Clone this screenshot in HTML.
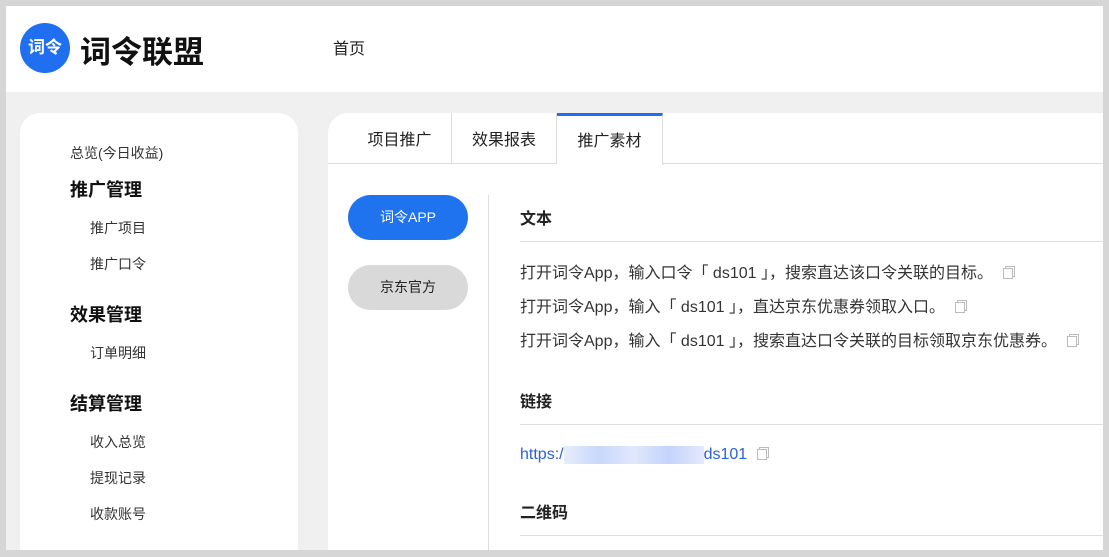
<!DOCTYPE html>
<html><head><meta charset="utf-8"><style>
*{margin:0;padding:0;box-sizing:border-box}
body{width:1109px;height:557px;background:#d6d6d6;font-family:"Liberation Sans","Noto Sans CJK SC",sans-serif;position:relative;overflow:hidden;color:#222}
.frame{position:absolute;left:6px;top:6px;width:1097px;height:544px;background:#f0f0f0;overflow:hidden}
.hdr{position:absolute;left:0;top:0;width:1097px;height:86px;background:#fff}
.logo{position:absolute;left:14px;top:17px;width:50px;height:50px;border-radius:50%;background:#1f6ff0;color:#fff;font-size:17px;font-weight:bold;text-align:center;line-height:50px}
.brand{position:absolute;left:74px;top:21px;font-size:31px;font-weight:bold;color:#111;letter-spacing:0px}
.nav{position:absolute;left:327px;top:29px;font-size:16px;color:#222}
.side{position:absolute;left:14px;top:107px;width:278px;height:460px;background:#fff;border-radius:20px}
.side div{position:absolute;white-space:nowrap}
.g{font-size:18px;font-weight:bold;color:#111;left:50px}
.i{font-size:14px;color:#333;left:70px}
.main{position:absolute;left:322px;top:107px;width:800px;height:460px;background:#fff;border-top-left-radius:20px}
.tabs{position:absolute;left:0;top:0;width:800px;height:51px;border-bottom:1px solid #ddd}
.tab{position:absolute;top:0;height:51px;font-size:16px;color:#222;text-align:center;line-height:56px}
.btn{position:absolute;left:20px;width:120px;height:45px;border-radius:23px;font-size:14px;text-align:center;line-height:45px}
.vl{position:absolute;left:160px;top:82px;width:1px;height:380px;background:#ddd}
.h{position:absolute;left:192px;font-size:16px;font-weight:bold;color:#222}
.hl{position:absolute;left:192px;width:620px;height:1px;background:#ddd}
.t{position:absolute;left:192px;font-size:16px;color:#333;white-space:nowrap}
.cp{display:inline-block;width:10px;height:11px;border:1px solid #bbb;margin-left:10px;position:relative;top:1px;box-shadow:2px -2px 0 -1px #fff,2px -2px 0 0 #bbb}
</style></head><body>
<div class="frame">
<div class="hdr">
<div class="logo">词令</div>
<div class="brand">词令联盟</div>
<div class="nav">首页</div>
</div>
<div class="side">
<div class="i" style="left:50px;top:30px">总览(今日收益)</div>
<div class="g" style="top:63px">推广管理</div>
<div class="i" style="top:105px">推广项目</div>
<div class="i" style="top:141px">推广口令</div>
<div class="g" style="top:188px">效果管理</div>
<div class="i" style="top:230px">订单明细</div>
<div class="g" style="top:277px">结算管理</div>
<div class="i" style="top:319px">收入总览</div>
<div class="i" style="top:355px">提现记录</div>
<div class="i" style="top:391px">收款账号</div>
</div>
<div class="main">
<div class="tabs">
<div class="tab" style="left:0;width:124px;border-right:1px solid #ddd;padding-left:20px">项目推广</div>
<div class="tab" style="left:124px;width:105px;border-right:1px solid #ddd">效果报表</div>
<div class="tab" style="left:229px;width:106px;border-right:1px solid #ddd;border-top:3px solid #1f6ff0;height:52px;background:#fff;line-height:52px">推广素材</div>
</div>
<div class="btn" style="top:82px;background:#1f73ee;color:#fff">词令APP</div>
<div class="btn" style="top:152px;background:#d9d9d9;color:#222">京东官方</div>
<div class="vl"></div>
<div class="h" style="top:92px">文本</div>
<div class="hl" style="top:128px"></div>
<div class="t" style="top:146px">打开词令App，输入口令「 ds101 」，搜索直达该口令关联的目标。<span class="cp"></span></div>
<div class="t" style="top:180px">打开词令App，输入「 ds101 」，直达京东优惠券领取入口。<span class="cp"></span></div>
<div class="t" style="top:214px">打开词令App，输入「 ds101 」，搜索直达口令关联的目标领取京东优惠券。<span class="cp"></span></div>
<div class="h" style="top:275px">链接</div>
<div class="hl" style="top:311px"></div>
<div class="t" style="top:333px;color:#2a62d8">https:/<span style="display:inline-block;width:140px;height:18px;background:linear-gradient(90deg,#e6edfc,#c9d7fb,#e0e8fd,#c5d3fb,#e3eafd);vertical-align:middle"></span>ds101<span class="cp"></span></div>
<div class="h" style="top:386px">二维码</div>
<div class="hl" style="top:422px"></div>
</div>
</div>
</body></html>
